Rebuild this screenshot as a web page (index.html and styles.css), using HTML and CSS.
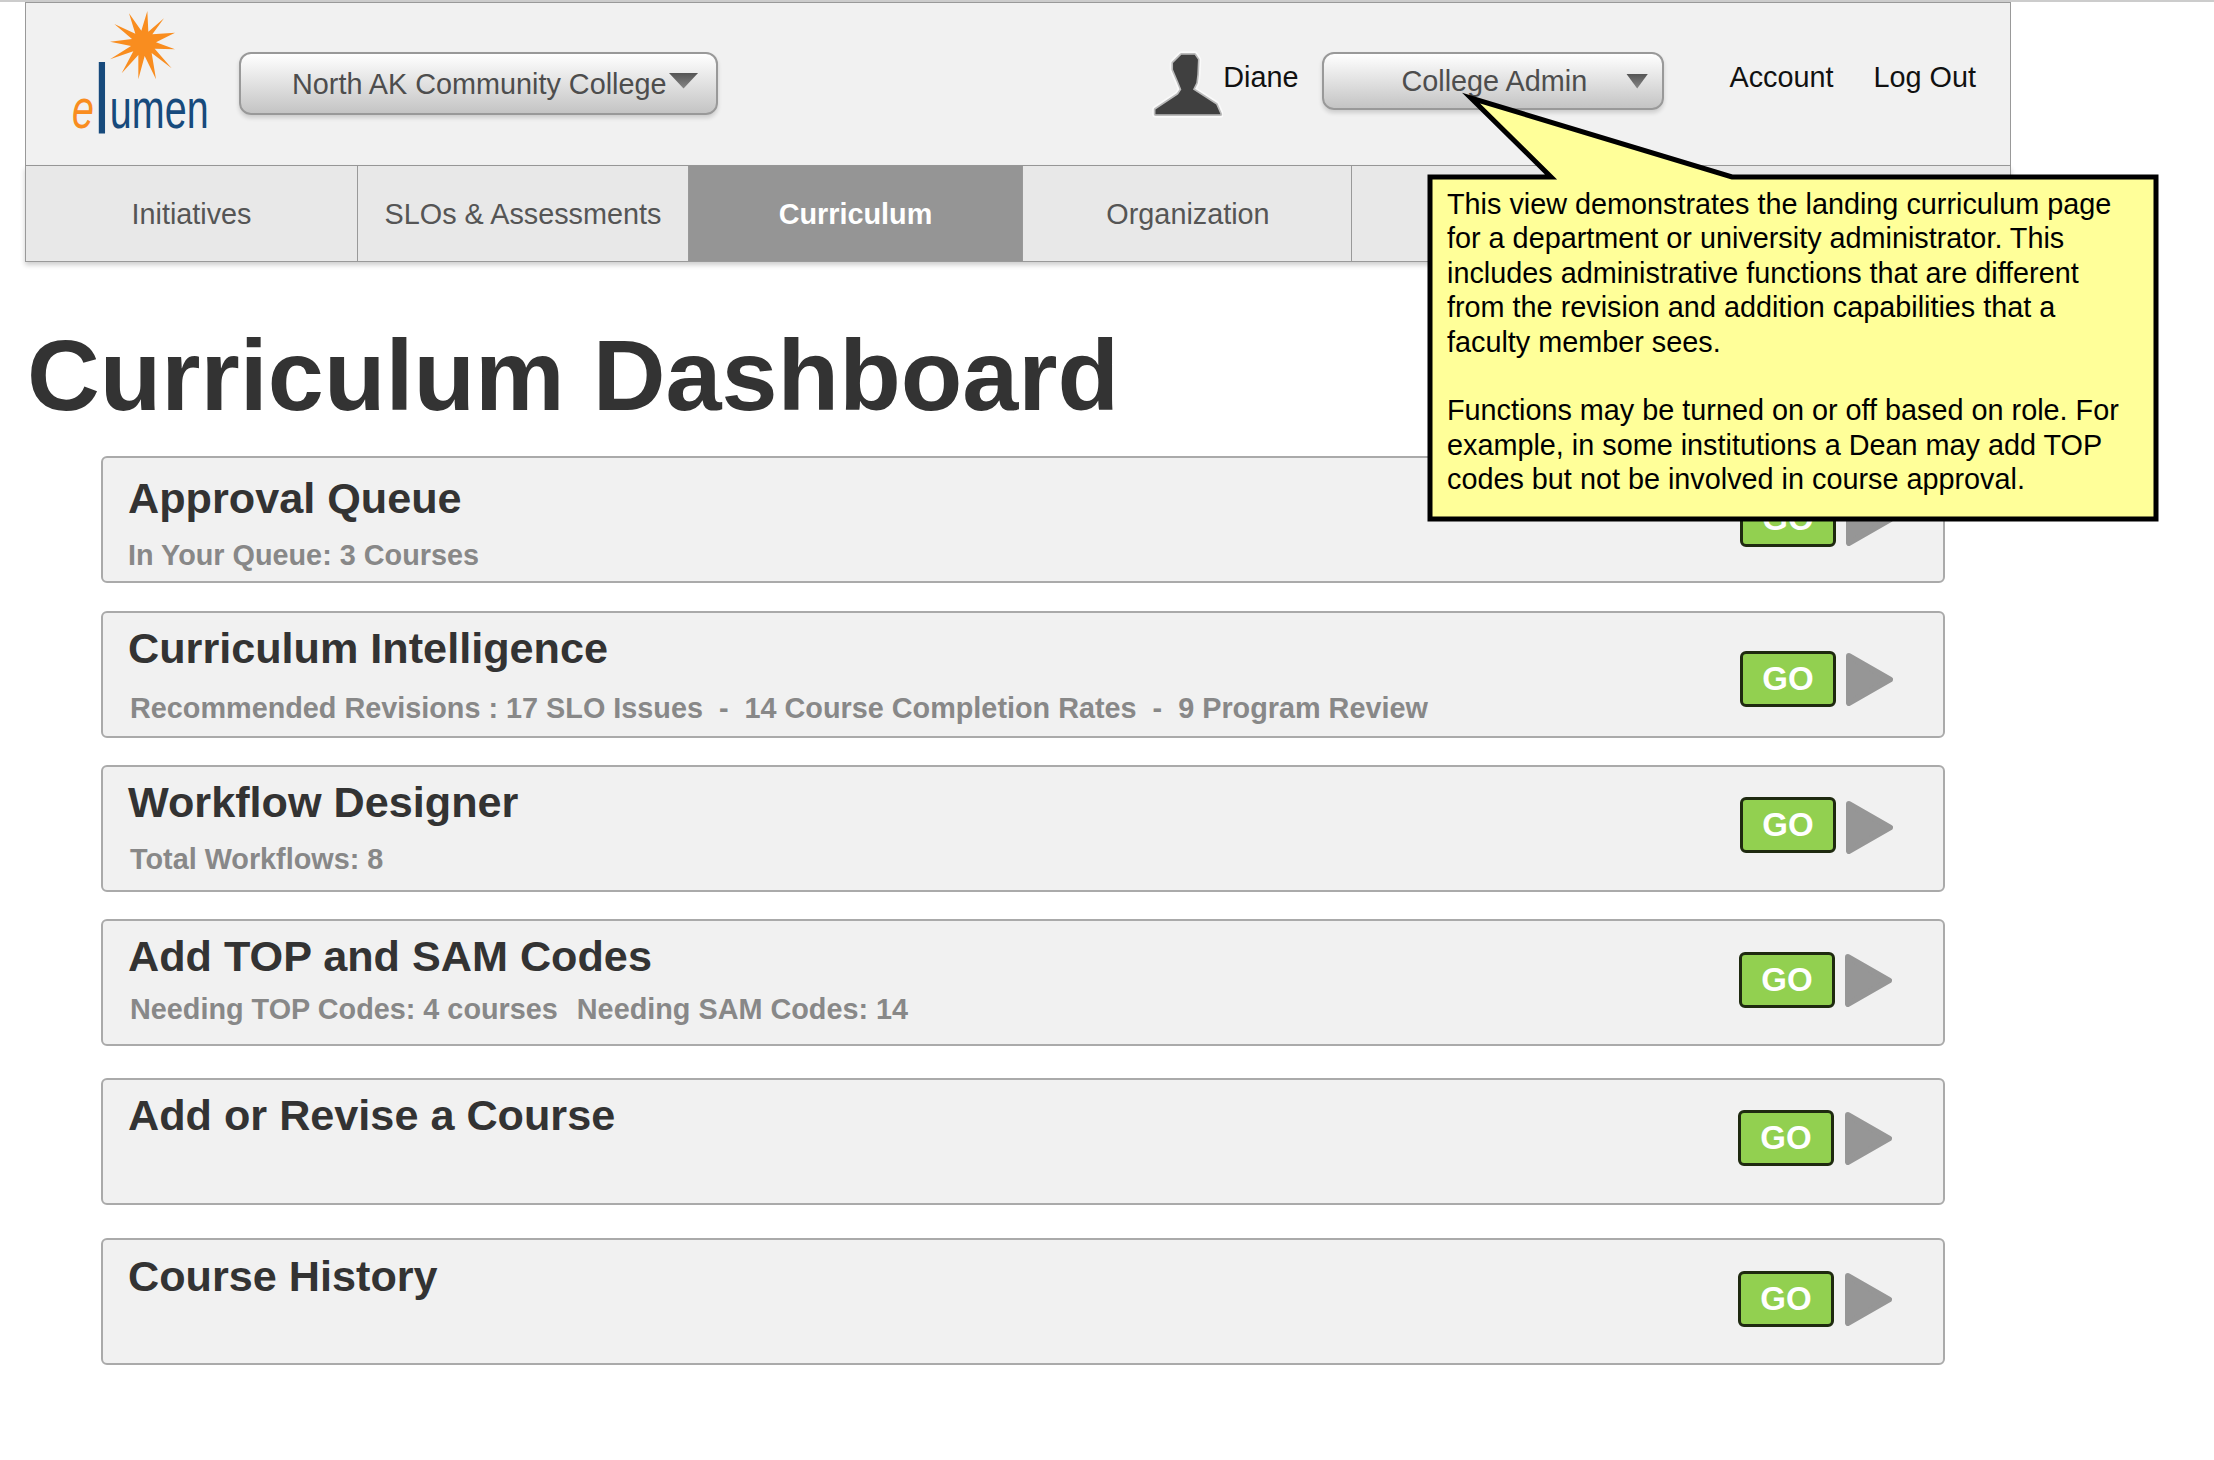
FILE: index.html
```html
<!DOCTYPE html>
<html lang="en">
<head>
    <meta charset="UTF-8">
    <title>Curriculum Dashboard</title>
    <link rel="stylesheet" href="styles.css">
</head>
<body>
    <header class="top">
        <svg class="logo" viewBox="0 0 510 510" aria-label="elumen">
            <polygon fill="#f98d1f" points="262,33 265,95 312,55 277,103 345,98 288,127 345,148 284,146 335,205 275,159 288,238 254,168 235,238 235,165 185,220 220,154 150,178 213,138 150,125 216,117 163,72 226,101 207,40 244,92"/>
            <text x="36" y="383" textLength="410" lengthAdjust="spacingAndGlyphs"><tspan class="logo-e">e</tspan><tspan class="logo-l" dy="17">l</tspan><tspan dy="-17">umen</tspan></text>
        </svg>
        <div class="dropdown college">
            <span>North AK Community College</span>
            <i class="caret"></i>
        </div>
        <svg class="user-icon" viewBox="50 25 225 220">
            <path class="user-halo" d="M72 225V210L140 165 150 150 140 125 125 90V70L150 45H190L200 60 198 105 195 130 185 150 255 195 268 225Z"/>
            <path class="user-ring" d="M72 225V210L140 165 150 150 140 125 125 90V70L150 45H190L200 60 198 105 195 130 185 150 255 195 268 225Z"/>
            <path class="user-body" d="M72 225V210L140 165 150 150 140 125 125 90V70L150 45H190L200 60 198 105 195 130 185 150 255 195 268 225Z"/>
        </svg>
        <span class="top-text user-name">Diane</span>
        <div class="dropdown role">
            <span>College Admin</span>
            <i class="caret"></i>
        </div>
        <a class="top-text account">Account</a>
        <a class="top-text logout">Log Out</a>
    </header>

    <nav class="tabs">
        <a class="tab tab-1">Initiatives</a>
        <a class="tab tab-2">SLOs &amp; Assessments</a>
        <a class="tab tab-3 active">Curriculum</a>
        <a class="tab tab-4">Organization</a>
        <a class="tab tab-5"></a>
        <a class="tab tab-6"></a>
    </nav>

    <h1>Curriculum Dashboard</h1>

    <main class="panels">
        <section class="panel approval">
            <div class="panel-text">
                <h2>Approval Queue</h2>
                <p>In Your Queue: 3 Courses</p>
            </div>
            <div class="go-wrap">
                <a class="go">GO</a>
                <svg class="arrow" viewBox="0 0 47 53"><polygon points="3,3 44,26.5 3,50"/></svg>
            </div>
        </section>
        <section class="panel intelligence">
            <div class="panel-text">
                <h2>Curriculum Intelligence</h2>
                <p>Recommended Revisions : 17 SLO Issues &nbsp;-&nbsp; 14 Course Completion Rates &nbsp;-&nbsp; 9 Program Review</p>
            </div>
            <div class="go-wrap">
                <a class="go">GO</a>
                <svg class="arrow" viewBox="0 0 47 53"><polygon points="3,3 44,26.5 3,50"/></svg>
            </div>
        </section>
        <section class="panel workflow">
            <div class="panel-text">
                <h2>Workflow Designer</h2>
                <p>Total Workflows: 8</p>
            </div>
            <div class="go-wrap">
                <a class="go">GO</a>
                <svg class="arrow" viewBox="0 0 47 53"><polygon points="3,3 44,26.5 3,50"/></svg>
            </div>
        </section>
        <section class="panel codes">
            <div class="panel-text">
                <h2>Add TOP and SAM Codes</h2>
                <p>Needing TOP Codes: 4 courses &nbsp;<span class="sam">Needing SAM Codes: 14</span></p>
            </div>
            <div class="go-wrap">
                <a class="go">GO</a>
                <svg class="arrow" viewBox="0 0 47 53"><polygon points="3,3 44,26.5 3,50"/></svg>
            </div>
        </section>
        <section class="panel revise">
            <div class="panel-text">
                <h2>Add or Revise a Course</h2>
            </div>
            <div class="go-wrap">
                <a class="go">GO</a>
                <svg class="arrow" viewBox="0 0 47 53"><polygon points="3,3 44,26.5 3,50"/></svg>
            </div>
        </section>
        <section class="panel history">
            <div class="panel-text">
                <h2>Course History</h2>
            </div>
            <div class="go-wrap">
                <a class="go">GO</a>
                <svg class="arrow" viewBox="0 0 47 53"><polygon points="3,3 44,26.5 3,50"/></svg>
            </div>
        </section>
    </main>

    <aside class="callout">
        <svg class="callout-shape" viewBox="0 0 740 435">
            <polygon points="5,87 126,87 46,8 307,87 731,87 731,429 5,429"/>
        </svg>
        <div class="callout-text">
            This view demonstrates the landing curriculum page<br>
            for a department or university administrator. This<br>
            includes administrative functions that are different<br>
            from the revision and addition capabilities that a<br>
            faculty member sees.<br>
            <br>
            Functions may be turned on or off based on role. For<br>
            example, in some institutions a Dean may add TOP<br>
            codes but not be involved in course approval.
        </div>
    </aside>
</body>
</html>
```

FILE: styles.css
```css
* {
    box-sizing: border-box;
}

body {
    margin: 0;
    border-top: 2px solid #ccc;
    background-color: #fff;
    font-family: "Liberation Sans", Arial, sans-serif;
    color: #333;
}

.top {
    display: flex;
    align-items: flex-start;
    width: 1986px;
    height: 166px;
    margin: -2px 0 0 25px;
    padding-right: 34px;
    background-color: #f1f1f1;
    border: 1px solid #999;
    border-top-width: 3px;
}

.logo {
    flex: none;
    width: 170px;
    height: 170px;
    margin: -3px 0 0 34px;
    overflow: visible;
}

.logo text {
    font-family: "Liberation Sans", Arial, sans-serif;
    font-size: 164px;
    fill: #174a7c;
}

.logo-e {
    font-style: italic;
    fill: #f98d1f;
}

.logo-l {
    font-size: 295px;
}

.dropdown {
    display: flex;
    align-items: center;
    background: linear-gradient(#fff, #c4c4c4);
    border: 2px solid #999;
    border-radius: 12px;
    box-shadow: 0 3px 4px rgba(0, 0, 0, 0.15);
    color: #4d4d4d;
    font-size: 28.8px;
}

.caret {
    display: block;
    background: linear-gradient(#555, #888);
    clip-path: polygon(0 0, 100% 0, 50% 100%);
}

.college {
    width: 479px;
    height: 63px;
    margin: 49px 0 0 9px;
    padding: 2px 0 0 51px;
}

.college .caret {
    width: 30px;
    height: 16px;
    margin: -8px 0 0 2px;
}

.user-icon {
    flex: none;
    width: 75px;
    height: 73px;
    margin: 45px 0 0 auto;
}

.user-halo,
.user-ring,
.user-body {
    stroke-linejoin: round;
}

.user-halo {
    fill: none;
    stroke: #fafafa;
    stroke-width: 20;
}

.user-ring {
    fill: none;
    stroke: #bbb;
    stroke-width: 10;
}

.user-body {
    fill: #404040;
}

.top-text {
    margin-top: 56px;
    color: #111;
    font-size: 28.8px;
    line-height: 36px;
}

.role {
    width: 342px;
    height: 58px;
    margin: 49px 0 0 24px;
    padding-left: 77px;
}

.role .caret {
    width: 22px;
    height: 15px;
    margin: 0 0 0 39px;
}

.account {
    margin-left: 65px;
}

.logout {
    margin-left: 40px;
}

.tabs {
    display: flex;
    width: 1986px;
    height: 96px;
    margin-left: 25px;
    border: 1px solid #999;
    border-top: 0;
    background-color: #e8e8e8;
    box-shadow: 0 3px 5px rgba(0, 0, 0, 0.2);
}

.tab {
    display: flex;
    align-items: center;
    justify-content: center;
    padding-top: 2px;
    border-right: 1px solid #999;
    color: #555;
    font-size: 28.8px;
}

.tab-1 { width: 332px; }
.tab-2 { width: 331px; }
.tab-3 { width: 334px; }
.tab-4 { width: 329px; padding-left: 2px; }
.tab-5 { width: 333px; }
.tab-6 { flex: 1; border-right: 0; }

.tab.active {
    background-color: #959595;
    color: #fff;
    font-weight: bold;
}

h1 {
    margin: 57px 0 0 27px;
    color: #333;
    font-size: 100.8px;
    line-height: 112px;
}

.panels {
    width: 1844px;
    margin: 25px 0 0 101px;
}

.panel {
    display: flex;
    justify-content: space-between;
    height: 127px;
    margin-top: 27px;
    background-color: #f1f1f1;
    border: 2px solid #aaa;
    border-radius: 6px;
}

.panel-text {
    padding: 10px 0 0 25px;
}

h2 {
    margin: 0;
    color: #333;
    font-size: 43.2px;
    line-height: 50px;
}

.panel p {
    margin: 14px 0 0 2px;
    color: #888;
    font-size: 28.8px;
    font-weight: bold;
    line-height: 36px;
}

.go-wrap {
    display: flex;
    align-items: center;
    gap: 10px;
    height: 56px;
    margin-top: 30px;
    padding-right: 50px;
}

.go {
    display: flex;
    align-items: center;
    justify-content: center;
    width: 96px;
    height: 56px;
    background-color: #92d050;
    border: 3px solid #1f2a10;
    border-radius: 6px;
    color: #fff;
    font-size: 33px;
    font-weight: bold;
}

.arrow {
    flex: none;
    width: 47px;
    height: 53px;
}

.arrow polygon {
    fill: #969696;
    stroke: #969696;
    stroke-width: 6;
    stroke-linejoin: round;
}

/* each box in the mockup sits a little differently */
.approval { margin-top: 0; }
.approval .panel-text { padding-top: 15px; }
.approval p { margin-top: 14px; margin-left: 0; }
.approval .go-wrap { margin-top: 33px; }

.intelligence { margin-top: 28px; }
.intelligence p { margin-top: 17px; }
.intelligence .go-wrap { margin-top: 38px; }

.workflow .arrow { margin-top: 5px; }

.codes p { margin-top: 10px; }
.codes .sam { margin-left: 3px; }
.codes .go-wrap { margin-top: 31px; padding-right: 51px; }

.revise { margin-top: 32px; }
.revise .go-wrap { gap: 11px; padding-right: 51px; }

.history { margin-top: 33px; }
.history .panel-text { padding-top: 11px; }
.history .go-wrap { margin-top: 31px; gap: 11px; padding-right: 51px; }

/* note laid over the page, pointing at the role dropdown */
.callout {
    position: absolute;
    left: 1425px;
    top: 90px;
    width: 740px;
    height: 435px;
}

.callout-shape {
    position: absolute;
    left: 0;
    top: 0;
    width: 740px;
    height: 435px;
}

.callout-shape polygon {
    fill: #ffff99;
    stroke: #000;
    stroke-width: 5;
    stroke-miterlimit: 10;
}

.callout-text {
    position: absolute;
    left: 22px;
    top: 97px;
    color: #000;
    font-size: 28.8px;
    line-height: 34.4px;
    white-space: nowrap;
}
```
